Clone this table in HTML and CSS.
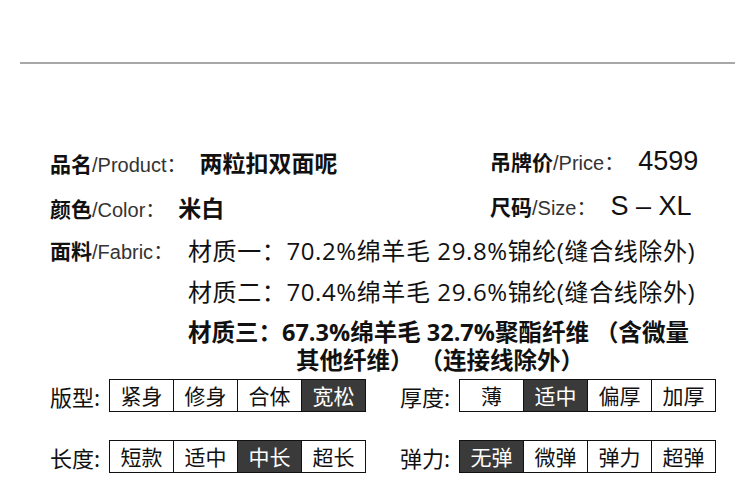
FILE: index.html
```html
<!DOCTYPE html>
<html>
  <head>
    <title>商品信息</title>
    <link rel="stylesheet" href="styles.css">
  </head>
  <body>
    <div class="rule"></div>
    <section class="info">
      <div class="row">
        <div class="col-left">
          <b class="key">品名</b><span class="en">/Product</span><span class="colon">：</span><span class="val">两粒扣双面呢</span>
        </div>
        <div class="col-right">
          <b class="key">吊牌价</b><span class="en">/Price</span><span class="colon">：</span><span class="num">4599</span>
        </div>
      </div>
      <div class="row">
        <div class="col-left">
          <b class="key">颜色</b><span class="en">/Color</span><span class="colon">：</span><span class="val">米白</span>
        </div>
        <div class="col-right">
          <b class="key">尺码</b><span class="en">/Size</span><span class="colon">：</span><span class="num">S – XL</span>
        </div>
      </div>

      <div class="fabric">
        <div class="fabric-label">
          <b class="key">面料</b><span class="en">/Fabric</span><span class="colon">：</span>
        </div>
        <div class="mats">
          <div class="mat">材质一：70.2%绵羊毛 29.8%锦纶(缝合线除外)</div>
          <div class="mat">材质二：70.4%绵羊毛 29.6%锦纶(缝合线除外)</div>
          <div class="mat mat-bold">
            <div>材质三：67.3%绵羊毛 32.7%聚酯纤维 （含微量</div>
            <div class="wrap">其他纤维） （连接线除外）</div>
          </div>
        </div>
      </div>

      <div class="specs">
        <div class="spec">
          <span class="spec-name">版型:</span>
          <div class="cells">
            <span class="cell">紧身</span>
            <span class="cell">修身</span>
            <span class="cell">合体</span>
            <span class="cell on">宽松</span>
          </div>
        </div>
        <div class="spec">
          <span class="spec-name">厚度:</span>
          <div class="cells">
            <span class="cell">薄</span>
            <span class="cell on">适中</span>
            <span class="cell">偏厚</span>
            <span class="cell">加厚</span>
          </div>
        </div>
        <div class="spec">
          <span class="spec-name">长度:</span>
          <div class="cells">
            <span class="cell">短款</span>
            <span class="cell">适中</span>
            <span class="cell on">中长</span>
            <span class="cell">超长</span>
          </div>
        </div>
        <div class="spec">
          <span class="spec-name">弹力:</span>
          <div class="cells">
            <span class="cell on">无弹</span>
            <span class="cell">微弹</span>
            <span class="cell">弹力</span>
            <span class="cell">超弹</span>
          </div>
        </div>
      </div>
    </section>
  </body>
</html>
```

FILE: styles.css
```css
body {
  margin: 0;
  background: #fff;
  color: #111;
  font-family: "Noto Sans CJK SC", sans-serif;
}

.rule {
  height: 2px;
  margin: 62px 15px 0 20px;
  background: #a8a8a8;
}

.info {
  padding: 75px 0 0 50px;
}

.row {
  display: flex;
  align-items: center;
  height: 45px;
}
.col-left {
  width: 440px;
}

.key {
  font-size: 21px;
  font-weight: 700;
}
.en {
  font-family: "Liberation Sans", sans-serif;
  font-size: 20px;
  color: #333;
}
.colon {
  font-size: 20px;
  color: #333;
}
.val {
  font-size: 23px;
  font-weight: 700;
  margin-left: 13px;
}
.num {
  font-family: "Liberation Sans", sans-serif;
  font-size: 27px;
  margin-left: 14px;
}

.fabric {
  display: flex;
  margin-top: 1px;
}
.fabric-label {
  width: 138px;
  line-height: 41px;
}
.mat {
  font-family: "Open Sans", "Noto Sans CJK SC", sans-serif;
  font-size: 24px;
  letter-spacing: 0.6px;
  line-height: 41px;
}
.mat-bold {
  font-size: 23.5px;
  font-weight: 700;
  letter-spacing: 0;
  line-height: 28px;
  margin-top: 6px;
}
.mat-bold .wrap {
  padding-left: 108px;
}

.specs {
  display: grid;
  grid-template-columns: 350px auto;
  row-gap: 28px;
  margin-top: 5px;
}
.spec {
  display: flex;
  align-items: center;
}
.spec-name {
  width: 59px;
  font-size: 22px;
}
.cells {
  display: flex;
  border: 1px solid #111;
}
.cell {
  width: 63px;
  height: 31px;
  line-height: 31px;
  text-align: center;
  font-size: 21px;
  border-left: 1px solid #111;
}
.cell:first-child {
  border-left: none;
}
.cell.on {
  background: #3a3a3a;
  color: #fff;
}
```
